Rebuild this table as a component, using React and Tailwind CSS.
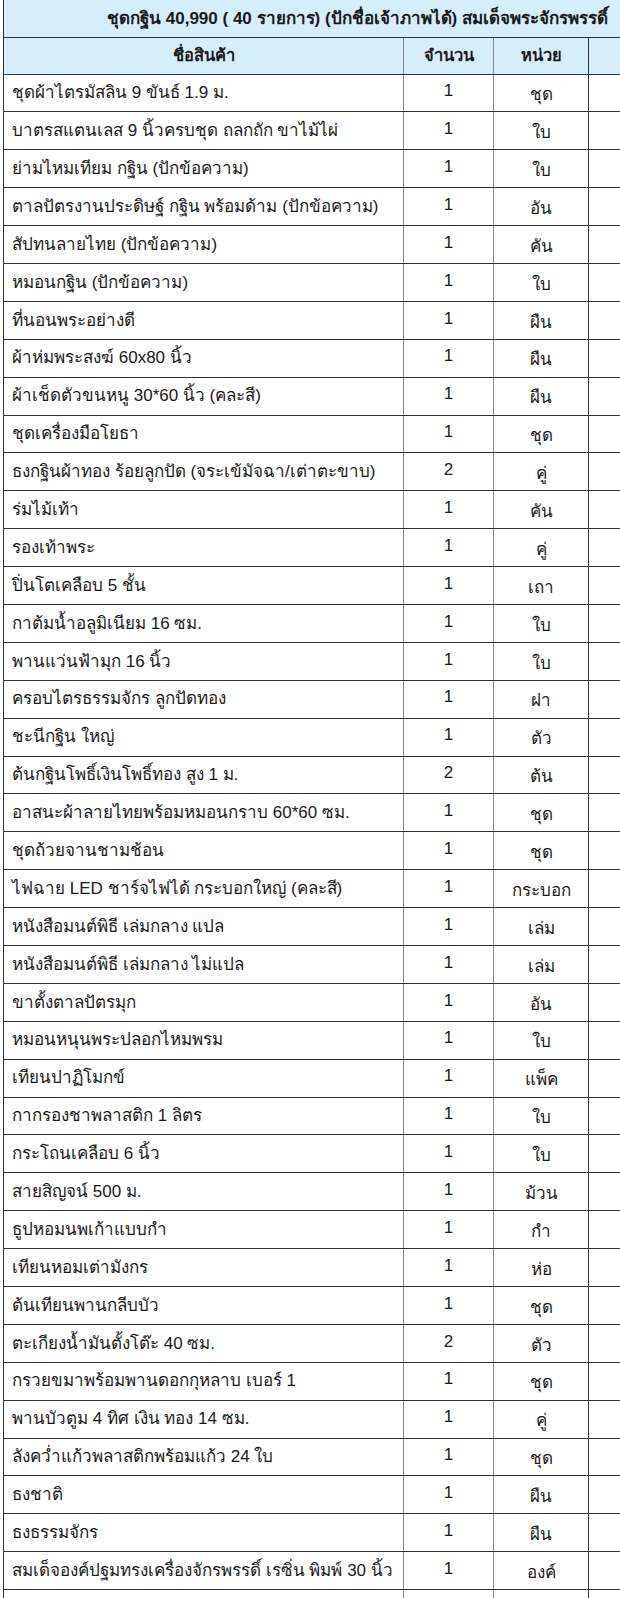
const items = [
  ["ชุดผ้าไตรมัสลิน 9 ขันธ์ 1.9 ม.", 1, "ชุด"],
  ["บาตรสแตนเลส 9 นิ้วครบชุด ถลกถัก ขาไม้ไผ่", 1, "ใบ"],
  ["ย่ามไหมเทียม กฐิน (ปักข้อความ)", 1, "ใบ"],
  ["ตาลปัตรงานประดิษฐ์ กฐิน พร้อมด้าม (ปักข้อความ)", 1, "อัน"],
  ["สัปทนลายไทย (ปักข้อความ)", 1, "คัน"],
  ["หมอนกฐิน (ปักข้อความ)", 1, "ใบ"],
  ["ที่นอนพระอย่างดี", 1, "ผืน"],
  ["ผ้าห่มพระสงฆ์ 60x80 นิ้ว", 1, "ผืน"],
  ["ผ้าเช็ดตัวขนหนู 30*60 นิ้ว (คละสี)", 1, "ผืน"],
  ["ชุดเครื่องมือโยธา", 1, "ชุด"],
  ["ธงกฐินผ้าทอง ร้อยลูกปัด (จระเข้มัจฉา/เต่าตะขาบ)", 2, "คู่"],
  ["ร่มไม้เท้า", 1, "คัน"],
  ["รองเท้าพระ", 1, "คู่"],
  ["ปิ่นโตเคลือบ 5 ชั้น", 1, "เถา"],
  ["กาต้มน้ำอลูมิเนียม 16 ซม.", 1, "ใบ"],
  ["พานแว่นฟ้ามุก 16 นิ้ว", 1, "ใบ"],
  ["ครอบไตรธรรมจักร ลูกปัดทอง", 1, "ฝา"],
  ["ชะนีกฐิน ใหญ่", 1, "ตัว"],
  ["ต้นกฐินโพธิ์เงินโพธิ์ทอง สูง 1 ม.", 2, "ต้น"],
  ["อาสนะผ้าลายไทยพร้อมหมอนกราบ 60*60 ซม.", 1, "ชุด"],
  ["ชุดถ้วยจานชามช้อน", 1, "ชุด"],
  ["ไฟฉาย LED ชาร์จไฟได้ กระบอกใหญ่ (คละสี)", 1, "กระบอก"],
  ["หนังสือมนต์พิธี เล่มกลาง แปล", 1, "เล่ม"],
  ["หนังสือมนต์พิธี เล่มกลาง ไม่แปล", 1, "เล่ม"],
  ["ขาตั้งตาลปัตรมุก", 1, "อัน"],
  ["หมอนหนุนพระปลอกไหมพรม", 1, "ใบ"],
  ["เทียนปาฏิโมกข์", 1, "แพ็ค"],
  ["กากรองชาพลาสติก 1 ลิตร", 1, "ใบ"],
  ["กระโถนเคลือบ 6 นิ้ว", 1, "ใบ"],
  ["สายสิญจน์ 500 ม.", 1, "ม้วน"],
  ["ธูปหอมนพเก้าแบบกำ", 1, "กำ"],
  ["เทียนหอมเต่ามังกร", 1, "ห่อ"],
  ["ต้นเทียนพานกลีบบัว", 1, "ชุด"],
  ["ตะเกียงน้ำมันตั้งโต๊ะ 40 ซม.", 2, "ตัว"],
  ["กรวยขมาพร้อมพานดอกกุหลาบ เบอร์ 1", 1, "ชุด"],
  ["พานบัวตูม 4 ทิศ เงิน ทอง 14 ซม.", 1, "คู่"],
  ["ลังคว่ำแก้วพลาสติกพร้อมแก้ว 24 ใบ", 1, "ชุด"],
  ["ธงชาติ", 1, "ผืน"],
  ["ธงธรรมจักร", 1, "ผืน"],
  ["สมเด็จองค์ปฐมทรงเครื่องจักรพรรดิ์ เรซิ่น พิมพ์ 30 นิ้ว", 1, "องค์"],
]

export default function App() {
  return (
    <div className="w-[620px] h-[1598px] overflow-hidden bg-white pl-[3px] font-['Liberation_Sans',sans-serif] text-[#1a1a1a]">
      <table className="w-[708px] border-collapse table-fixed">
        <colgroup>
          <col className="w-[400px]" />
          <col className="w-[90px]" />
          <col className="w-[95px]" />
          <col className="w-[123px]" />
        </colgroup>
        <thead>
          <tr className="h-[37px] bg-[#d6edfa]">
            <th colSpan={4} className="border border-[#333] border-t-0 text-center text-[17px] font-bold whitespace-nowrap">
              ชุดกฐิน 40,990 ( 40 รายการ) (ปักชื่อเจ้าภาพได้) สมเด็จพระจักรพรรดิ์
            </th>
          </tr>
          <tr className="h-[37px] bg-[#d6edfa]">
            <th className="border border-[#333] border-r-[#888] text-center text-[16.5px] font-bold">ชื่อสินค้า</th>
            <th className="border border-[#333] border-r-[#888] text-center text-[16.5px] font-bold">จำนวน</th>
            <th className="border border-[#333] text-center text-[16.5px] font-bold">หน่วย</th>
            <th className="border border-[#333]"></th>
          </tr>
        </thead>
        <tbody>
          {items.map(([name, qty, unit], i) => (
            <tr key={i} className="h-[37.9px]">
              <td className="border border-[#333] border-r-[#888] px-2 text-[17px] whitespace-nowrap">{name}</td>
              <td className="border border-[#333] border-r-[#888] text-center text-[17px] pb-1">{qty}</td>
              <td className="border border-[#333] text-center text-[17px] pt-1">{unit}</td>
              <td className="border border-[#333]"></td>
            </tr>
          ))}
          <tr className="h-[37.9px]">
            <td className="border border-[#333] border-r-[#888]"></td>
            <td className="border border-[#333] border-r-[#888]"></td>
            <td className="border border-[#333]"></td>
            <td className="border border-[#333]"></td>
          </tr>
        </tbody>
      </table>
    </div>
  )
}
